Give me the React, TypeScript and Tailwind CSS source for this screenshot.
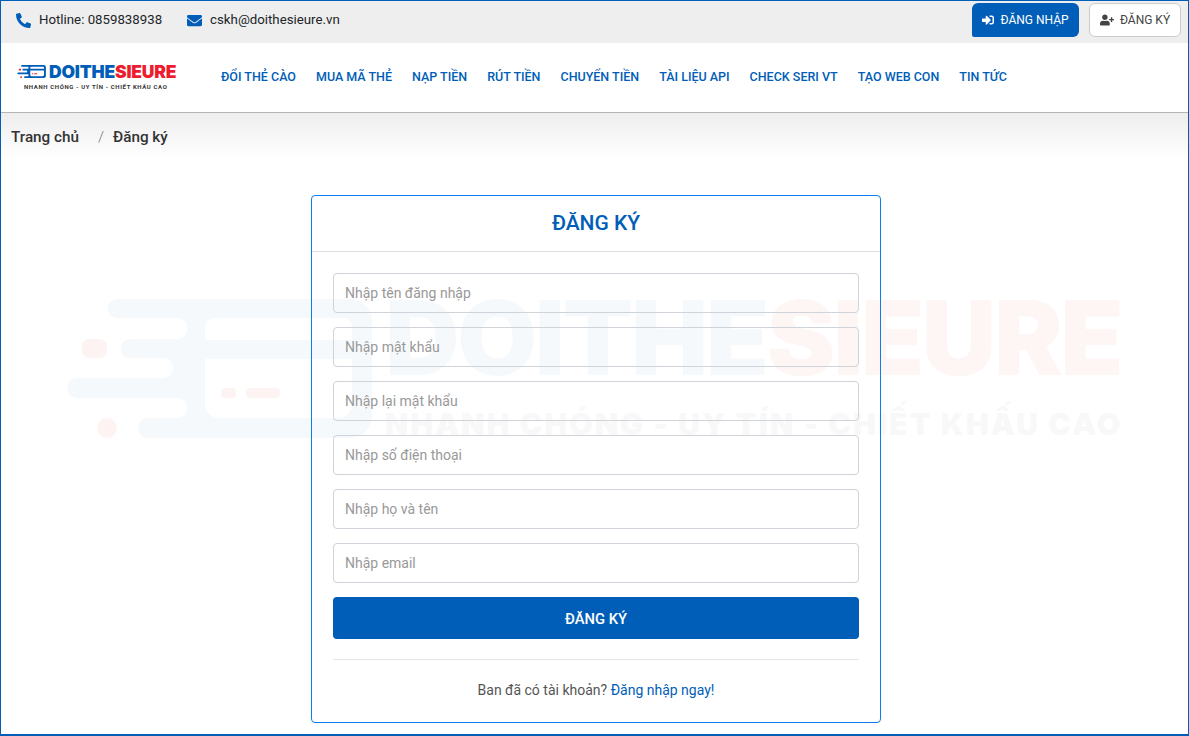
import { FaPhoneAlt, FaEnvelope, FaSignInAlt, FaUserPlus } from 'react-icons/fa';

const navItems = ['ĐỔI THẺ CÀO', 'MUA MÃ THẺ', 'NẠP TIỀN', 'RÚT TIỀN', 'CHUYỂN TIỀN', 'TÀI LIỆU API', 'CHECK SERI VT', 'TẠO WEB CON', 'TIN TỨC'];
const fields = ['Nhập tên đăng nhập', 'Nhập mật khẩu', 'Nhập lại mật khẩu', 'Nhập số điện thoại', 'Nhập họ và tên', 'Nhập email'];

function LogoIcon({ className, blue, red }: { className: string; blue: string; red: string }) {
    return (
        <svg viewBox="67 299 313 139" className={className}>
            <path
                fill={blue}
                fillRule="evenodd"
                d="M117 299H350a22 22 0 0 1 22 22V416a22 22 0 0 1-22 22H148a10 10 0 0 1 0-20H177a10 10 0 0 0 0-20H77a10 10 0 0 1 0-20H163a10 10 0 0 0 0-20H130a9.5 9.5 0 0 1 0-19H177a10 10 0 0 0 0-21H117a9.5 9.5 0 0 1 0-19ZM205 327a9 9 0 0 1 9-9H343a9 9 0 0 1 9 9V340H205ZM205 359H352V404a14 14 0 0 1-14 14H219a14 14 0 0 1-14-14Z"
            />
            <g fill={red}>
                <rect x="82" y="339" width="25" height="19" rx="7" />
                <circle cx="107" cy="428" r="10" />
                <rect x="221" y="388" width="15" height="10" rx="4" />
                <rect x="246" y="388" width="34" height="10" rx="4" />
            </g>
        </svg>
    );
}

export default function App() {
    return (
        <div className="relative h-[736px] overflow-hidden border border-b-2 border-[#005eb8] bg-white font-['Roboto',sans-serif] text-[#212529]">
            {/* faded logo behind the form */}
            <div className="absolute left-[66px] top-[298px] flex items-start">
                <LogoIcon className="h-[139px] w-[313px]" blue="#f6f9fc" red="#fdf3f2" />
                <div className="ml-[5px] mt-[-11px] whitespace-nowrap font-['Inter',sans-serif] font-black">
                    <div className="text-[103px] leading-[100px] tracking-[-2.25px]">
                        <span className="text-[#f6f9fc]">DOITHE</span>
                        <span className="text-[#fdf6f5]">SIEURE</span>
                    </div>
                    <div className="mt-[18px] text-[30px] leading-[36px] tracking-[2.3px] text-[#f8f8f8]">NHANH CHÓNG - UY TÍN - CHIẾT KHẤU CAO</div>
                </div>
            </div>

            <div className="flex h-[42px] items-start justify-between bg-[#eeeeee] pl-[15px] pr-[7px] pt-[2px]">
                <div className="flex h-[34px] items-center text-[13.25px]">
                    <FaPhoneAlt className="h-[15px] w-[15px] text-[#005eb8]" />
                    <span className="ml-[8px]">Hotline: 0859838938</span>
                    <FaEnvelope className="ml-[25px] h-[15px] w-[15px] text-[#005eb8]" />
                    <span className="ml-[8px]">cskh@doithesieure.vn</span>
                </div>
                <div className="flex items-center gap-[10px] text-xs">
                    <button className="flex h-[34px] w-[107px] items-center justify-center gap-[6px] rounded-[6px] rounded-bl-[2px] bg-[#005eb8] text-white">
                        <FaSignInAlt className="h-[12px] w-[12px]" />
                        ĐĂNG NHẬP
                    </button>
                    <button className="flex h-[34px] w-[92px] items-center justify-center gap-[6px] rounded-[6px] border border-[#cccccc] bg-white text-[#444444]">
                        <FaUserPlus className="h-[14px] w-[14px]" />
                        ĐĂNG KÝ
                    </button>
                </div>
            </div>

            <div className="flex h-[70px] items-center border-b border-[#b5b5b5] bg-white pl-[16px]">
                <div className="mb-[2px] w-[204px]">
                    <div className="flex items-center">
                        <LogoIcon className="h-[13px] w-[30px]" blue="#005eb8" red="#ee1c2e" />
                        <span className="ml-[2px] font-['Inter',sans-serif] text-[17.5px] font-black leading-[18px] tracking-[-0.2px]">
                            <span className="text-[#005eb8]">DOITHE</span>
                            <span className="text-[#ee1c2e]">SIEURE</span>
                        </span>
                    </div>
                    <div className="ml-[7px] mt-[1px] whitespace-nowrap text-[6px] font-bold leading-[9px] tracking-[0.62px] text-[#333333]">NHANH CHÓNG - UY TÍN - CHIẾT KHẤU CAO</div>
                </div>
                <div className="flex gap-[20px] text-[12.5px] font-medium text-[#005eb8]">
                    {navItems.map(item => (
                        <a key={item}>{item}</a>
                    ))}
                </div>
            </div>

            <div className="flex h-[47px] items-center bg-gradient-to-b from-[#eeeeee] to-white pl-[10px] pt-[1px] text-[15.25px] font-medium text-[#333333]">
                <span>Trang chủ</span>
                <span className="ml-[19px] font-light text-[#777777]">/</span>
                <span className="ml-[9px]">Đăng ký</span>
            </div>

            <div className="relative ml-[310px] mt-[35px] h-[528px] w-[570px] rounded-[4px] border border-[#0a7cf0]">
                <div className="flex h-[56px] items-center justify-center border-b border-[#dddddd] text-[21px] font-medium text-[#005eb8]">ĐĂNG KÝ</div>
                <div className="px-[21px] pt-[21px]">
                    <div className="flex flex-col gap-[14px]">
                        {fields.map(field => (
                            <input
                                key={field}
                                type="text"
                                placeholder={field}
                                className="h-[40px] w-full rounded-[4px] border border-[#ced4da] bg-transparent px-[11px] text-sm placeholder:text-[#999999]"
                            />
                        ))}
                    </div>
                    <button className="mt-[14px] h-[42px] w-full rounded-[4px] bg-[#005eb8] pt-[2px] text-[14.75px] font-medium text-white">ĐĂNG KÝ</button>
                    <div className="mt-[20px] border-t border-[#e6e6e6] pt-[20px] text-center text-sm text-[#555555]">
                        Ban đã có tài khoản? <a className="text-[#005eb8]">Đăng nhập ngay!</a>
                    </div>
                </div>
            </div>
        </div>
    );
}
